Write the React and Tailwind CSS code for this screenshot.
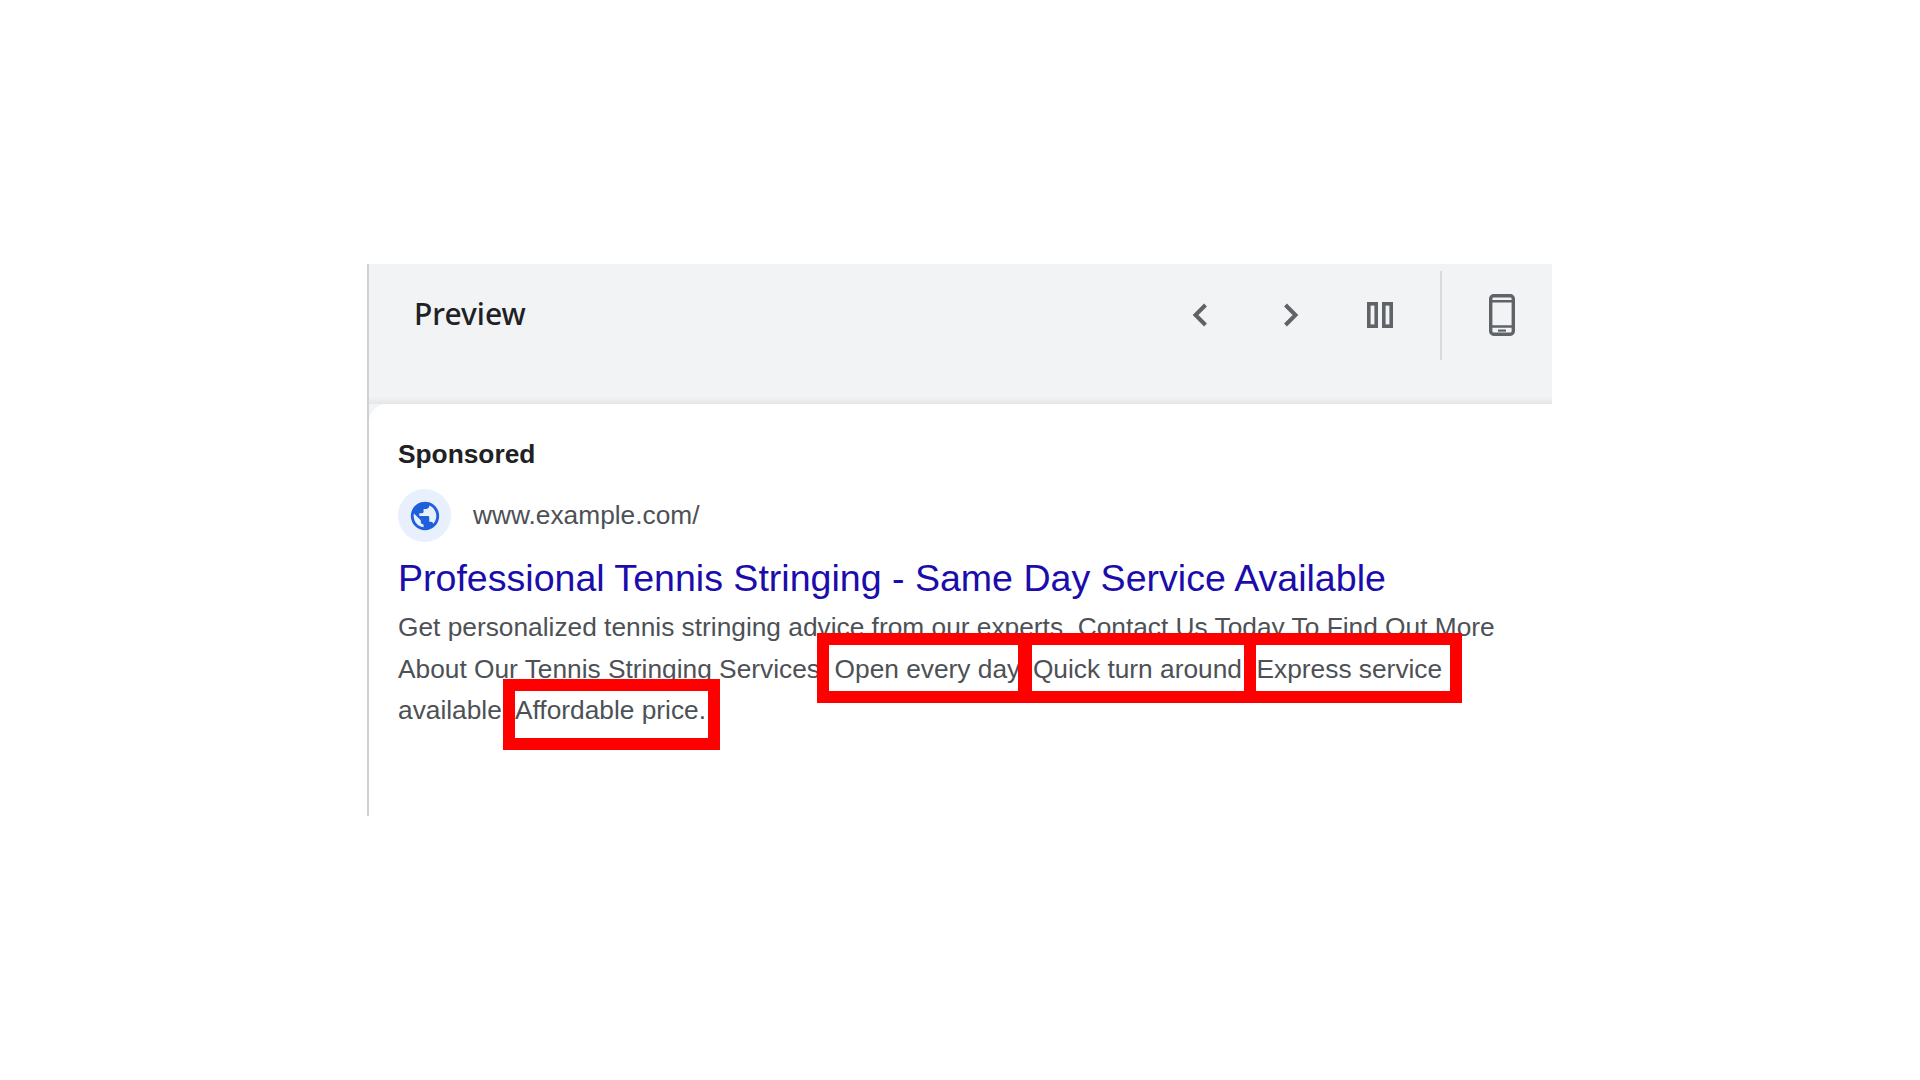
function ChevronLeft() {
  return (
    <svg width="16" height="24" viewBox="0 0 16 24" fill="none" stroke="#5f6368" strokeWidth="4">
      <path d="M13.5 2 L3.5 12 L13.5 22" />
    </svg>
  );
}

function ChevronRight() {
  return (
    <svg width="16" height="24" viewBox="0 0 16 24" fill="none" stroke="#5f6368" strokeWidth="4">
      <path d="M2.5 2 L12.5 12 L2.5 22" />
    </svg>
  );
}

function Columns() {
  return (
    <svg width="26" height="26" viewBox="0 0 26 26" fill="none" stroke="#5f6368" strokeWidth="3.6">
      <rect x="1.8" y="1.8" width="7.4" height="22.4" />
      <rect x="16.8" y="1.8" width="7.4" height="22.4" />
    </svg>
  );
}

function Phone() {
  return (
    <svg width="26" height="42" viewBox="0 0 26 42" fill="none" stroke="#5f6368">
      <rect x="1.7" y="1.7" width="22.6" height="38.6" rx="3" strokeWidth="3.4" />
      <path d="M2 7.2 H24 M2 32.5 H24" strokeWidth="2.6" />
      <path d="M9 36.6 H17" strokeWidth="2.2" />
    </svg>
  );
}

function Globe() {
  return (
    <svg width="34" height="34" viewBox="0 0 24 24" fill="#1f5fdc">
      <path d="M12 2C6.48 2 2 6.48 2 12s4.48 10 10 10 10-4.48 10-10S17.52 2 12 2zm-1 17.93c-3.95-.49-7-3.85-7-7.93 0-.62.08-1.21.21-1.79L9 15v1c0 1.1.9 2 2 2v1.93zm6.9-2.54c-.26-.81-1-1.39-1.9-1.39h-1v-3c0-.55-.45-1-1-1H8v-2h2c.55 0 1-.45 1-1V7h2c1.1 0 2-.9 2-2v-.41c2.93 1.19 5 4.06 5 7.41 0 2.08-.8 3.97-2.1 5.39z" />
    </svg>
  );
}

export default function App() {
  return (
    <div className="h-screen bg-white pt-[264px] pl-[367px] overflow-hidden font-['Liberation_Sans',sans-serif]">
      <div className="w-[1185px] h-[552px] bg-[#f1f3f5] border-l-2 border-[#cfd1d3] flex flex-col">
        <div className="h-[102px] flex items-center pl-[45px] shrink-0">
          <span className="font-['Noto_Sans',sans-serif] font-medium text-[30px] leading-none text-[#202124] pb-[2px]">Preview</span>
          <div className="ml-auto flex items-center">
            <div className="w-[16px] flex justify-center mr-[75px]"><ChevronLeft /></div>
            <div className="w-[16px] flex justify-center mr-[68px]"><ChevronRight /></div>
            <Columns />
            <div className="w-[2px] h-[89px] bg-[#d8dadc] ml-[47px] mr-[47px]" />
            <div className="mr-[37px]"><Phone /></div>
          </div>
        </div>
        <div className="h-[38px] shrink-0 bg-gradient-to-b from-[#f1f3f5] from-80% to-[#e4e6e8]" />
        <div className="flex-1 bg-white rounded-tl-[18px] pl-[29px] pt-[33px]">
          <div className="text-[26.3px] leading-[34px] font-bold text-[#202124]">Sponsored</div>
          <div className="flex items-center gap-[22px] mt-[18px] h-[53px]">
            <div className="w-[53px] h-[53px] rounded-full bg-[#e8f0fe] flex items-center justify-center">
              <Globe />
            </div>
            <span className="text-[26.3px] leading-none text-[#4d5156] pb-[1px]">www.example.com/</span>
          </div>
          <div className="mt-[13px] text-[37.55px] leading-[46px] text-[#1a0dab]">Professional Tennis Stringing - Same Day Service Available</div>
          <p className="mt-[6px] w-[1110px] text-[26.3px] leading-[41.6px] text-[#4d5156]">
            Get personalized tennis stringing advice from our experts. Contact Us Today To Find Out More About Our Tennis Stringing Services.{" "}
            <span className="relative">
              Open every day.
              <span className="absolute left-[-18px] right-[-4px] top-[-21px] bottom-[-19px] border-[12px] border-[#ff0000]" />
            </span>{" "}
            <span className="relative">
              Quick turn around.
              <span className="absolute left-[-13px] right-[-7px] top-[-21px] bottom-[-19px] border-[12px] border-[#ff0000]" />
            </span>{" "}
            <span className="relative">
              Express service
              <span className="absolute left-[-13px] right-[-20px] top-[-21px] bottom-[-19px] border-[12px] border-[#ff0000]" />
            </span>{" "}
            available.{" "}
            <span className="relative">
              Affordable price.
              <span className="absolute left-[-12px] right-[-14px] top-[-16px] bottom-[-25px] border-[12px] border-[#ff0000]" />
            </span>
          </p>
        </div>
      </div>
    </div>
  );
}
